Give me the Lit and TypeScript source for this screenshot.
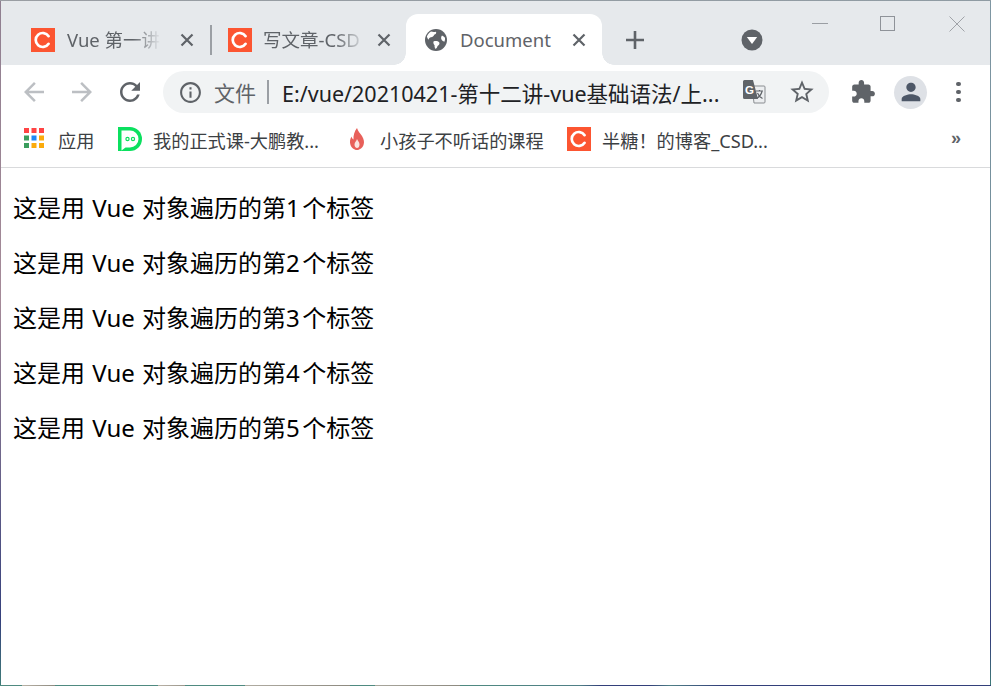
import { LitElement, html, css, svg } from "lit";
import { customElement } from "lit/decorators.js";

const icon = (d: string, cls = "") => html`<svg class="ic ${cls}" viewBox="0 0 24 24"><path d=${d}></path></svg>`;

const csdn = html`<svg class="fav" viewBox="0 0 24 24"><rect width="24" height="24" fill="#fc5531"></rect><path d="M17.6 8.2A7 7 0 1 0 17.6 15.8" fill="none" stroke="#fff" stroke-width="2.7" stroke-linecap="round"></path></svg>`;

const closeX = html`<svg class="x" viewBox="0 0 14 14"><path d="M1.5 1.5l11 11M12.5 1.5l-11 11" stroke="#5f6368" stroke-width="2.2" fill="none"></path></svg>`;

const P = {
  arrow: "M20 11H7.83l5.59-5.59L12 4l-8 8 8 8 1.41-1.41L7.83 13H20v-2z",
  reload: "M17.65 6.35C16.2 4.9 14.21 4 12 4c-4.42 0-7.99 3.58-7.99 8s3.57 8 7.99 8c3.73 0 6.84-2.55 7.73-6h-2.08c-.82 2.33-3.04 4-5.65 4-3.31 0-6-2.69-6-6s2.69-6 6-6c1.66 0 3.14.69 4.22 1.78L13 11h7V4l-2.35 2.35z",
  star: "M22 9.24l-7.19-.62L12 2 9.19 8.63 2 9.24l5.46 4.73L5.82 21 12 17.27 18.18 21l-1.63-7.03L22 9.24zM12 15.4l-3.76 2.27 1-4.28-3.32-2.88 4.38-.38L12 6.1l1.71 4.04 4.38.38-3.32 2.88 1 4.28L12 15.4z",
  info: "M11 7h2v2h-2zm0 4h2v6h-2zm1-9C6.48 2 2 6.48 2 12s4.48 10 10 10 10-4.48 10-10S17.52 2 12 2zm0 18c-4.41 0-8-3.59-8-8s3.59-8 8-8 8 3.59 8 8-3.59 8-8 8z",
  puzzle: "M20.5 11H19V7c0-1.1-.9-2-2-2h-4V3.5C13 2.12 11.88 1 10.5 1S8 2.12 8 3.5V5H4c-1.1 0-1.99.9-1.99 2v3.8H3.5c1.49 0 2.7 1.21 2.7 2.7s-1.21 2.7-2.7 2.7H2V20c0 1.1.9 2 2 2h3.8v-1.5c0-1.49 1.21-2.7 2.7-2.7 1.49 0 2.7 1.21 2.7 2.7V22H17c1.1 0 2-.9 2-2v-4h1.5c1.38 0 2.5-1.12 2.5-2.5S21.88 11 20.5 11z",
  person: "M12 12c2.21 0 4-1.79 4-4s-1.79-4-4-4-4 1.79-4 4 1.79 4 4 4zm0 2c-2.67 0-8 1.34-8 4v2h16v-2c0-2.66-5.33-4-8-4z",
};

const appColors = ["#f44", "#f44", "#f44", "#3a9d5d", "#1e88f5", "#fbab0c", "#3a9d5d", "#fbab0c", "#fbab0c"];
const apps = html`<svg class="apps" viewBox="0 0 20 20">${appColors.map((c, i) =>
  svg`<rect x=${(i % 3) * 7.5} y=${Math.floor(i / 3) * 7.5} width="5" height="5" fill=${c}></rect>`)}</svg>`;

@customElement("app-root")
export class AppRoot extends LitElement {
  static styles = css`
    :host { display: block; width: 991px; height: 686px; font-family: "Noto Sans", "Noto Sans CJK SC", sans-serif; }
    .frame { box-sizing: border-box; width: 991px; height: 686px; padding: 1px;
      background:
        linear-gradient(90deg, #4f8a80 0, #4f8a80 22px, #b9b2a6 22px, #8d8a80 55px, #4f8a80 55px, #4f8a80 158px, #b9b2a6 158px, #9a968c 185px, #4f8a80 185px, #4f8a80 245px, #b0aca2 245px, #8d8a80 350px, #4f8a80 350px, #4f8a80 375px, #a8a69c 375px, #8d8a80 460px, #4f8a80 460px, #4f7f86 580px, #33407a 600px, #33407a 650px, #4f7f86 670px, #33407a 720px, #33407a 991px) left bottom / 100% 1px no-repeat,
        linear-gradient(90deg, #9a9ea3, #8f9ba3) left top / 100% 1px no-repeat,
        linear-gradient(180deg, #8f7f90 0, #a58a98 300px, #35407c 620px, #3f7d78 686px) left top / 1px 100% no-repeat,
        linear-gradient(180deg, #7f97a3 0, #6f8c99 300px, #35407c 640px, #3f7d78 686px) right top / 1px 100% no-repeat;
    }
    .win { height: 100%; background: #fff; display: flex; flex-direction: column; overflow: hidden; }

    .strip { height: 64px; flex: none; background: #e6e9ec; display: flex; padding-left: 12px; position: relative; }
    .tabs { display: flex; height: 64px; }
    .tab { box-sizing: border-box; display: flex; align-items: center; height: 51px; margin-top: 13px; padding-left: 18px; position: relative; color: #5f6368; font-size: 18.5px; }
    .tab.one { width: 198px; }
    .tab.two { width: 195px; padding-left: 17px; }
    .tab.two::before { content: ""; position: absolute; left: -1px; top: 11px; width: 2px; height: 30px; background: #9b9fa4; }
    .tab.active { width: 196px; padding-left: 19px; background: #fff; border-radius: 12px 12px 0 0; }
    .tab.active::before, .tab.active::after { content: ""; position: absolute; bottom: 0; width: 12px; height: 12px; }
    .tab.active::before { left: -12px; background: radial-gradient(circle at 0 0, #e6e9ec 11.5px, #fff 12px); }
    .tab.active::after { right: -12px; background: radial-gradient(circle at 100% 0, #e6e9ec 11.5px, #fff 12px); }
    .fav { width: 24px; height: 24px; flex: none; display: block; }
    .globe { width: 22px; height: 22px; flex: none; display: block; }
    .title { flex: none; margin-left: 12px; white-space: nowrap; line-height: 28px; }
    .one .title { width: 94px; -webkit-mask-image: linear-gradient(90deg, #000 70%, transparent 100%); }
    .two .title { width: 103px; margin-left: 11px; -webkit-mask-image: linear-gradient(90deg, #000 70%, transparent 100%); }
    .active .title { width: 112px; margin-left: 13px; }
    .x { width: 14px; height: 14px; flex: none; margin-left: 19px; display: block; }
    .two .x { margin-left: 11px; }
    .active .x { margin-left: 0; }
    .plus { width: 20px; height: 20px; margin: 29px 0 0 23px; flex: none; display: block; }
    .drop { width: 22px; height: 22px; margin: 28px 0 0 96px; flex: none; display: block; }
    .wc { position: absolute; top: 15px; width: 16px; height: 16px; display: block; }
    .wc.min { left: 811px; } .wc.max { left: 879px; } .wc.cl { left: 948px; }

    .bar { box-sizing: border-box; height: 55px; flex: none; display: flex; align-items: center; padding: 0 0 1px 18px; }
    .ic { display: block; fill: #5f6368; flex: none; width: 30px; height: 30px; }
    .ic.off { fill: #bcbfc3; }
    .flip { transform: scaleX(-1); margin-left: 18px; }
    .ic.re { margin-left: 18px; }
    .omni { box-sizing: border-box; width: 666px; height: 42px; margin-left: 18px; border-radius: 21px; background: #f1f3f4; display: flex; align-items: center; padding-left: 15px; }
    .omni .ic.i { width: 25px; height: 25px; }
    .scheme { color: #5f6368; margin-left: 11px; white-space: nowrap; font-size: 21px; }
    .sep { width: 2px; height: 24px; background: #9b9fa4; margin-left: 11px; flex: none; }
    .url { width: 440px; margin-left: 13px; color: #202124; white-space: nowrap; font-size: 21.5px; }
    .tr { width: 24px; height: 24px; margin-left: 20px; flex: none; display: block; }
    .omni .ic.st { width: 28px; height: 28px; margin-left: 22px; }
    .ic.pz { width: 26px; height: 26px; margin-left: 21px; }
    .avatar { width: 33px; height: 33px; border-radius: 50%; background: #dee1e6; margin-left: 18px; flex: none; display: flex; align-items: center; justify-content: center; }
    .avatar .ic { fill: #4d5767; width: 28px; height: 28px; }
    .kebab { display: flex; flex-direction: column; gap: 3.5px; margin-left: 29px; flex: none; }
    .kebab i { display: block; width: 4.5px; height: 4.5px; border-radius: 50%; background: #5f6368; }

    .marks { box-sizing: border-box; height: 48px; flex: none; border-bottom: 1px solid #d9dadc; display: flex; align-items: center; padding: 0 0 6px 23px; color: #3c4043; font-size: 18.2px; position: relative; }
    .apps { width: 20px; height: 20px; flex: none; display: block; margin-top: -6px; }
    .mk { white-space: nowrap; line-height: 24px; }
    .m1 { margin-left: 14px; width: 60px; }
    .sq { width: 24px; height: 24px; flex: none; display: block; margin-top: -4px; }
    .m2 { margin-left: 11px; width: 196px; }
    .fl { width: 16px; height: 24px; flex: none; display: block; margin-top: -4px; }
    .m3 { margin-left: 15px; width: 187px; }
    .m4 { margin-left: 11px; }
    .more { position: absolute; left: 950px; top: 6px; font-size: 18px; line-height: 24px; color: #5f6368; font-family: "Liberation Sans", sans-serif; font-weight: 700; }

    .page { flex: 1; padding: 24px 12px 0; color: #000; font-size: 24px; word-spacing: 1px; }
    .page p { margin: 0 0 24px; line-height: 31px; white-space: nowrap; }
    .n { letter-spacing: 2.5px; }
  `;

  render() {
    const rows = [1, 2, 3, 4, 5];
    return html`<div class="frame"><div class="win">
      <div class="strip">
        <div class="tabs">
          <div class="tab one">${csdn}<span class="title">Vue 第一讲</span>${closeX}</div>
          <div class="tab two">${csdn}<span class="title">写文章-CSD</span>${closeX}</div>
          <div class="tab active">
            <svg class="globe" viewBox="0 0 22 22"><circle cx="11" cy="11" r="11" fill="#5f6368"></circle>
              <path d="M6 2.500c2 .6 3.600.4 5 .2.7 1.400-.4 2.600-1.800 3.100-.5 1.500-1.700 2.300-3.200 2.500-1.200.2-2.200 1.200-2.400 2.500-.9-.9-1.500-2-1.700-3.200C2.700 5.500 4 3.700 6 2.500z" fill="#fff"></path>
              <path d="M8.500 12.500c2.200-.8 4.500-.3 5.800 1 .6 1.500-.4 2.800-1.700 3.500-.3 1.300-1 2.300-2 3-.9-1.300-1.200-2.500-1-3.800-1-.9-1.500-2.300-1.100-3.700zM17 6.500c1.200.5 2.200 1.200 3 2.200.2 1.400 0 2.700-.6 4-1.500-.3-2.600-1.200-3.100-2.600-.4-1.300-.1-2.600.7-3.600z" fill="#fff"></path></svg>
            <span class="title">Document</span>${closeX}
          </div>
        </div>
        <svg class="plus" viewBox="0 0 20 20"><path d="M10 1v18M1 10h18" stroke="#5f6368" stroke-width="2.6"></path></svg>
        <svg class="drop" viewBox="0 0 22 22"><circle cx="11" cy="11" r="10.500" fill="#5f6368"></circle><path d="M5.800 8h10.400L11 15z" fill="#fff"></path></svg>
        <svg class="wc min" viewBox="0 0 16 16"><path d="M0 7.500h16" stroke="#9a9ea3"></path></svg>
        <svg class="wc max" viewBox="0 0 16 16"><rect x=".5" y=".5" width="14" height="14" fill="none" stroke="#8f9399"></rect></svg>
        <svg class="wc cl" viewBox="0 0 16 16"><path d="M.5.500l15 15M15.500.500l-15 15" stroke="#a0a3a8"></path></svg>
      </div>

      <div class="bar">
        ${icon(P.arrow, "off")}
        ${icon(P.arrow, "off flip")}
        ${icon(P.reload, "re")}
        <div class="omni">
          ${icon(P.info, "i")}
          <span class="scheme">文件</span><span class="sep"></span>
          <span class="url">E:/vue/20210421-第十二讲-vue基础语法/上...</span>
          <svg class="tr" viewBox="0 0 24 24">
            <path d="M10 6h12a1 1 0 0 1 1 1v15a1 1 0 0 1-1 1H12z" fill="#eceef0" stroke="#8a8d91" stroke-width="1"></path>
            <path d="M1 1.500A1.500 1.500 0 0 1 2.500 0H11l5 19H2.500A1.500 1.500 0 0 1 1 17.500z" fill="#5f6368"></path>
            <text x="3" y="14" font-size="11.500" font-weight="700" fill="#fff" font-family="Liberation Sans">G</text>
            <path d="M14 11h7M17.500 10v1.500M20 11.500c-.8 3-2.800 5.500-5.500 7M15.500 13c1 2.500 3 4.500 5 5.500" stroke="#5f6368" stroke-width="1.200" fill="none"></path>
          </svg>
          ${icon(P.star, "st")}
        </div>
        ${icon(P.puzzle, "pz")}
        <div class="avatar">${icon(P.person)}</div>
        <div class="kebab"><i></i><i></i><i></i></div>
      </div>

      <div class="marks">
        ${apps}<span class="mk m1">应用</span>
        <svg class="sq" viewBox="0 0 24 24">
          <path d="M0 0h12a12 12 0 0 1 0 24H0z" fill="#0be05f"></path>
          <path d="M3.500 3.500h8.500a8.500 8.500 0 0 1 0 17H7.500l-4 3z" fill="#fff"></path>
          <circle cx="9.500" cy="12" r="1.600" fill="none" stroke="#0be05f" stroke-width="1.200"></circle>
          <circle cx="15" cy="12" r="1.600" fill="none" stroke="#0be05f" stroke-width="1.200"></circle>
        </svg>
        <span class="mk m2">我的正式课-大鹏教...</span>
        <svg class="fl" viewBox="0 0 16 24">
          <path d="M8 1c1 3.500 3 5 5 8 2 3.500 2.500 6 1.500 9-1 2.600-3.500 5-6.500 5s-5.500-2.400-6.500-5C.5 15 1 12 2.500 9.500c.3 1.500 1 2.300 2 3C4.200 8.500 5.500 4 8 1z" fill="#e8605a"></path>
          <path d="M8 12c.6 2 2.500 3 2.500 5.500S9.300 21 8 21s-2.500-1.200-2.500-3.500S7.500 14 8 12z" fill="#fbe4e0"></path>
        </svg>
        <span class="mk m3">小孩子不听话的课程</span>
        <span class="sq">${csdn}</span>
        <span class="mk m4">半糖！的博客_CSD...</span>
        <span class="more">»</span>
      </div>

      <div class="page">
        ${rows.map((n) => html`<p>这是用 Vue 对象遍历的第<span class="n">${n}</span>个标签</p>`)}
      </div>
    </div></div>`;
  }
}
